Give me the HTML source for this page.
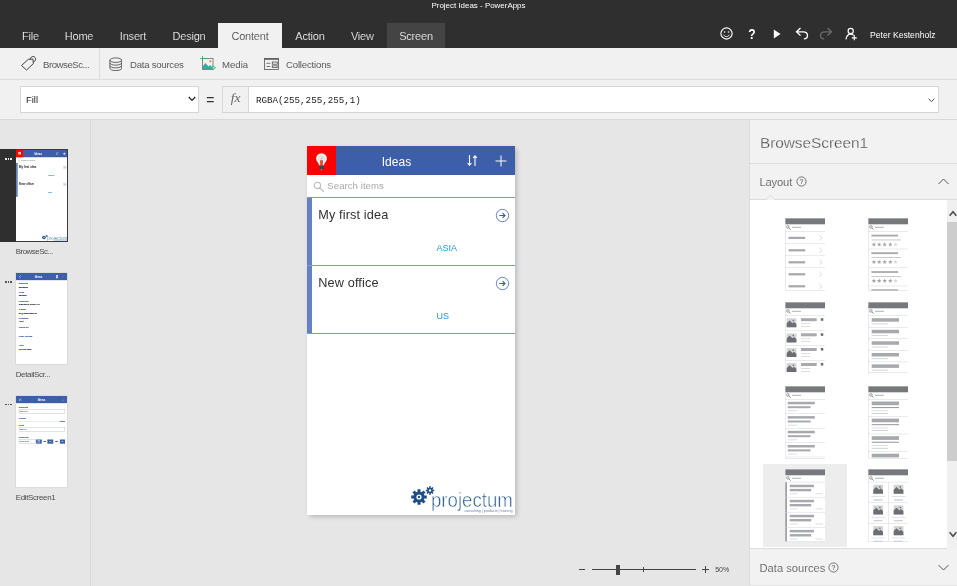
<!DOCTYPE html>
<html><head><meta charset="utf-8"><title>Project Ideas - PowerApps</title>
<style>
*{box-sizing:border-box;margin:0;padding:0}
html,body{width:957px;height:586px;overflow:hidden}
body{background:#e6e6e6;font-family:"Liberation Sans",sans-serif;position:relative;color:#333}
#root{position:absolute;left:0;top:0;width:957px;height:586px;overflow:hidden;will-change:transform;transform:translateZ(0)}
.abs{position:absolute}
#top{left:0;top:0;width:957px;height:48px;background:#2f2f2f}
#title{left:0;top:1px;width:957px;text-align:center;color:#fff;font-size:7.95px;line-height:10px}
.tab{position:absolute;top:23px;height:25px;line-height:26px;color:#fff;font-size:11px;letter-spacing:-0.2px;text-align:center;white-space:nowrap;-webkit-text-stroke:.2px #2f2f2f}
#ribbon{left:0;top:48px;width:957px;height:32px;background:#f1f1f1;border-bottom:1px solid #dcdcdc}
.rl{position:absolute;top:48px;height:31px;line-height:33px;font-size:9.6px;color:#5a5a5a;white-space:nowrap}
#fbar{left:0;top:80px;width:957px;height:40px;background:#f1f1f1;border-bottom:1px solid #d9d9d9}
#leftp{left:0;top:120px;width:91px;height:466px;background:#e6e6e6;border-right:1px solid #d8d8d8}
#rightp{left:749px;top:120px;width:208px;height:466px;background:#f2f2f2;border-left:1px solid #dcdcdc}
.phone{position:absolute;width:208px;height:369.5px;background:#fff;overflow:hidden;font-family:"Liberation Sans",sans-serif}
.phone .hd{position:absolute;left:0;top:0;width:100%;height:29px;background:#3d5fa9}
.phone .red{position:absolute;left:0;top:0;width:28.6px;height:29px;background:#fe0000}
.phone .ttl{position:absolute;left:0;top:.5px;width:179px;text-align:center;color:#fff;font-size:12px;line-height:30px;letter-spacing:.05px}
.phone .srch{position:absolute;left:20.3px;top:29px;height:22px;line-height:22px;font-size:9.6px;letter-spacing:.05px;color:#a9a9a9}
.phone .it{position:absolute;left:0;width:100%;height:68px;border-top:1px solid #7f98d0}
.phone .it .bar{position:absolute;left:0;top:0;width:5px;height:68px;background:#6682be}
.phone .it .t{position:absolute;left:11.3px;top:9px;font-size:12.7px;letter-spacing:.13px;line-height:16px;color:#333;white-space:nowrap}
.phone .it .r{position:absolute;left:129.5px;top:45.1px;font-size:9px;line-height:10px;color:#2796dc;white-space:nowrap}
.phone .it svg{position:absolute;left:187.9px;top:9.8px}
.phone .lb{position:absolute;left:11.5px;font-size:9.5px;line-height:10px;color:#3d5fa9;font-weight:bold;white-space:nowrap}
.phone .vl{position:absolute;left:11.5px;font-size:9.5px;line-height:10px;color:#222;white-space:nowrap}
.phone .inp{position:absolute;left:11.5px;width:188px;height:17px;border:1px solid #8a8a8a;font-size:8.5px;line-height:15px;padding-left:3px;color:#222}
.thumb{position:absolute;left:16px;width:52px;height:92px;overflow:hidden;background:#fff}
.thumb .phone{left:0;top:0;transform:scale(.2494);transform-origin:0 0}
.thumb.t2 .phone{transform:scale(.2452,.2471)}
.thumb .it{border-top-color:transparent}
.thumb .dv{display:none}
.thumb .it .bar{width:7px}
.thumb .it .r{font-weight:bold;font-size:10px;-webkit-text-stroke:.5px #2796dc}
.thumb .it .t{-webkit-text-stroke:.4px #333}
.thumb .plus{stroke-width:2.4px}
.thumb .ttl{font-weight:bold}
.thumb .lb{-webkit-text-stroke:.5px #3d5fa9}
.thumb .vl{-webkit-text-stroke:.5px #222}
.thumb .srch{-webkit-text-stroke:.4px #a9a9a9}
.tl{position:absolute;left:15.7px;font-size:7.9px;line-height:10px;color:#4a4a4a;white-space:nowrap;letter-spacing:-0.3px}
.dots{position:absolute;left:5px;width:7px;height:2px}
.dots i{position:absolute;top:0;width:1.7px;height:1.7px;background:#555}
.dots i.w{background:#e8e8e8}
</style></head><body><div id="root">
<div id="top" class="abs"></div>
<div id="title" class="abs">Project Ideas - PowerApps</div>
<div class="tab" style="left:10px;width:41px">File</div>
<div class="tab" style="left:54px;width:50px">Home</div>
<div class="tab" style="left:108px;width:50px">Insert</div>
<div class="tab" style="left:164px;width:50px">Design</div>
<div class="tab" style="left:218px;width:64px;background:#f1f1f1;color:#333;-webkit-text-stroke:.2px #f1f1f1">Content</div>
<div class="tab" style="left:285px;width:50px">Action</div>
<div class="tab" style="left:337.300px;width:50px">View</div>
<div class="tab" style="left:387px;width:58px;background:#444;-webkit-text-stroke:.2px #444">Screen</div>
<!-- right icons -->
<svg class="abs" style="left:718.600px;top:26.300px" width="15" height="15" viewBox="0 0 15 15" fill="none" stroke="#fff" stroke-width="1.150"><circle cx="7.500" cy="7.500" r="5.600"/><path d="M4.600 8.700c.7 1.400 1.800 1.900 2.900 1.900s2.200-.5 2.900-1.900" stroke-width=".9"/><circle cx="5.500" cy="6" r=".75" fill="#fff" stroke="none"/><circle cx="9.500" cy="6" r=".75" fill="#fff" stroke="none"/></svg>
<svg class="abs" style="left:745px;top:25px" width="14" height="18" viewBox="0 0 14 18"><text x="7" y="14.500" font-size="15.500" font-weight="bold" text-anchor="middle" fill="#fff" font-family="Liberation Sans, sans-serif" transform="translate(7 0) scale(.78 1) translate(-7 0)">?</text></svg>
<svg class="abs" style="left:773px;top:28.500px" width="8" height="10" viewBox="0 0 8 10"><path d="M.8 .4l6.700 4.600L.8 9.600z" fill="#fff"/></svg>
<svg class="abs" style="left:795px;top:27px" width="14" height="13" viewBox="0 0 14 13" fill="none" stroke="#fff" stroke-width="1.300"><path d="M5.500 1L1.500 4.800l4 3.800M1.800 4.800h6.400c2.500 0 4.300 1.600 4.300 3.700 0 2-1.500 3.400-3.600 3.400"/></svg>
<svg class="abs" style="left:819px;top:27px" width="14" height="13" viewBox="0 0 14 13" fill="none" stroke="#6b6b6b" stroke-width="1.300"><path d="M8.500 1l4 3.800-4 3.800M12.200 4.800H5.800c-2.500 0-4.300 1.600-4.300 3.700 0 2 1.500 3.400 3.600 3.400"/></svg>
<svg class="abs" style="left:844px;top:26px" width="15" height="15" viewBox="0 0 15 15" fill="none" stroke="#fff" stroke-width="1.150"><circle cx="6.700" cy="4.900" r="2.600"/><path d="M2 13.400c.4-3.200 2.300-5.300 4.700-5.300 1.200 0 2.200.4 3 1.200M10.300 9.300v5M7.800 11.800h5"/></svg>
<div class="abs" style="left:870px;top:23px;height:25px;line-height:24px;color:#fff;font-size:8.600px;white-space:nowrap">Peter Kestenholz</div>
<div id="ribbon" class="abs"></div>
<svg class="abs" style="left:20px;top:55px" width="18" height="18" viewBox="0 0 18 18" fill="none" stroke="#444" stroke-width="1"><path d="M1.500 10.500l6.800-6.200 4.700-.2.300 4.600-6.800 6.300z"/><path d="M10.200 4.200c.3-1.700 1.500-2.800 3-2.700 1.500.1 2.500 1.300 2.400 2.800-.1 1.400-1 2.400-2.400 2.700"/></svg>
<div class="rl" style="left:43px;letter-spacing:-0.450px">BrowseSc...</div>
<div class="abs" style="left:99px;top:48px;width:1px;height:31px;background:#dcdcdc"></div>
<svg class="abs" style="left:108.700px;top:56.800px" width="13.600" height="14.500" viewBox="0 0 15 16" fill="none" stroke="#444" stroke-width=".9"><ellipse cx="7.500" cy="3.500" rx="6.500" ry="2.500"/><path d="M1 3.500v9c0 1.400 2.900 2.500 6.500 2.500s6.500-1.100 6.500-2.500v-9M1 6.500C1 7.900 3.900 9 7.500 9S14 7.900 14 6.500M1 9.500C1 10.900 3.900 12 7.500 12s6.500-1.100 6.500-2.500"/></svg>
<div class="rl" style="left:130px;letter-spacing:-0.250px">Data sources</div>
<svg class="abs" style="left:200px;top:56px" width="16" height="16" viewBox="0 0 16 16" fill="none"><rect x="2.500" y="2.500" width="10.500" height="11" stroke="#7a7a7a" stroke-width=".9"/><path d="M3 13V10l2.500-3 3 3.500 1.500-1.500 2.500 2.500V13z" fill="#3aa9a4"/><circle cx="10.300" cy="5.200" r="1" fill="#e8742e"/><path d="M2.500 0v5M0 2.500h5" stroke="#3aa35a" stroke-width=".8"/><path d="M12.700 9.800l2.800 1.900-2.800 1.900z" stroke="#3aa35a" stroke-width=".8" fill="#f1f1f1"/></svg>
<div class="rl" style="left:222px">Media</div>
<svg class="abs" style="left:264px;top:58px" width="15" height="12" viewBox="0 0 15 12" fill="none" stroke="#555" stroke-width=".8"><rect x=".5" y=".5" width="14" height="11"/><path d="M.5 1.100h14" stroke-width="1.300"/><path d="M2.500 5.300h3.800M2.500 8.500h3.800"/><rect x="8.300" y="4" width="5" height="2.200"/><rect x="8.300" y="7.800" width="5" height="1.700"/></svg>
<div class="rl" style="left:286px;letter-spacing:-0.180px">Collections</div>
<div id="fbar" class="abs"></div>
<div class="abs" style="left:19.600px;top:86.100px;width:179.200px;height:27.200px;background:#fff;border:1px solid #d6d6d6"></div>
<div class="abs" style="left:26px;top:87px;height:26px;line-height:26px;font-size:9.400px;color:#222">Fill</div>
<svg class="abs" style="left:188px;top:96px" width="8" height="6" viewBox="0 0 8 6" fill="none" stroke="#222" stroke-width="1.300"><path d="M.8 1l3.200 3.400L7.200 1"/></svg>
<div class="abs" style="left:206.200px;top:88px;height:26px;line-height:25px;font-size:14px;color:#333">=</div>
<div class="abs" style="left:222.400px;top:86.100px;width:717px;height:27.200px;background:#fff;border:1px solid #d6d6d6"></div>
<div class="abs" style="left:223.400px;top:87.100px;width:25.500px;height:25.200px;background:#f1f1f1;border-right:1px solid #d6d6d6;font-family:'Liberation Serif',serif;font-style:italic;font-size:13.500px;line-height:22px;text-align:center;color:#666">fx</div>
<div class="abs" style="left:256px;top:87px;height:26px;line-height:27px;font-family:'Liberation Mono',monospace;font-size:9.200px;color:#222">RGBA(255,255,255,1)</div>
<svg class="abs" style="left:928px;top:98px" width="7" height="5" viewBox="0 0 7 5" fill="none" stroke="#555" stroke-width="1"><path d="M.7.700l2.800 3 2.800-3"/></svg>

<div class="phone" style="left:307px;top:146.400px;height:369.100px;box-shadow:1.5px 1.5px 5px rgba(0,0,0,.22)"><div class="abs" style="left:0;top:-.4px;width:208px;height:369.500px"><div class="hd"></div><div class="red"></div>
<svg class="abs" style="left:6.800px;top:5.500px" width="15" height="20" viewBox="0 0 15 20"><path d="M7.500 1.200a5.400 5.400 0 0 1 5.400 5.400c0 2.300-1.600 3.600-2.600 5.400l-.3 1.600H5l-.3-1.600C3.700 10.200 2.100 8.900 2.100 6.600a5.400 5.400 0 0 1 5.400-5.400z" fill="#f4f4f4"/><circle cx="7.500" cy="6.400" r="3.500" fill="#e2e2e2"/><circle cx="7.500" cy="6.700" r=".45" fill="#777"/><path d="M6 8.300h3l-.2 5.500H6.200z" fill="#ea4a35"/><path d="M5.300 13.600h4.400v2.600l-1.300 1.600H6.600l-1.300-1.600z" fill="#37474f"/><path d="M6.600 17.500h1.800l-.9 1z" fill="#eee"/></svg>
<div class="ttl">Ideas</div>
<svg class="abs" style="left:159px;top:8px" width="13" height="13" viewBox="0 0 13 13" fill="none" stroke="#fff" stroke-width="1.100"><path d="M3.500 1v10M1.600 9.200l1.900 1.900 1.900-1.900M9 12V2M7.100 3.800l1.900-1.900 1.900 1.900"/></svg>
<svg class="abs plus" style="left:188px;top:9px" width="12" height="12" viewBox="0 0 12 12" stroke="#fff" stroke-width="1"><path d="M6 .5v11M.5 6h11"/></svg>
<svg class="abs" style="left:5.800px;top:35px" width="11.600" height="11.600" viewBox="0 0 11 11" fill="none" stroke="#bcbcbc" stroke-width="1.050"><circle cx="4.200" cy="4.200" r="3"/><path d="M6.400 6.400l3.800 3.800"/></svg>
<div class="srch">Search items</div>
<div class="it" style="top:51px"><div class="bar"></div><div class="t">My first idea</div><div class="r">ASIA</div><svg width="15" height="15" viewBox="0 0 15 15" fill="none" stroke="#3d5fa9" stroke-width=".75"><circle cx="7.500" cy="7.500" r="6.200"/><path d="M4.300 7.500h5.500M7.600 5.100l2.400 2.400-2.400 2.400" stroke-width="1.200"/></svg></div>
<div class="it" style="top:119px"><div class="bar"></div><div class="t">New office</div><div class="r">US</div><svg width="15" height="15" viewBox="0 0 15 15" fill="none" stroke="#3d5fa9" stroke-width=".75"><circle cx="7.500" cy="7.500" r="6.200"/><path d="M4.300 7.500h5.500M7.600 5.100l2.400 2.400-2.400 2.400" stroke-width="1.200"/></svg></div>
<div class="abs dv" style="left:0;top:187px;width:100%;height:1px;background:#7f98d0"></div>
<div class="abs" style="left:104px;top:338px;width:104px;height:30px">
<svg class="abs" style="left:0;top:.5px" width="24" height="22" viewBox="0 0 24 22"><g fill="#1f4e86"><circle cx="8" cy="12" r="5.600"/><g stroke="#1f4e86" stroke-width="3"><path d="M8 4.200v15.600M.2 12h15.600M2.500 6.500l11 11M13.500 6.500l-11 11"/></g><circle cx="19" cy="5.500" r="2.800"/><g stroke="#1f4e86" stroke-width="1.600"><path d="M19 1.300v8.400M14.800 5.500h8.400M16 2.500l6 6M22 2.500l-6 6"/></g></g><circle cx="8" cy="12" r="2.600" fill="#fff"/><circle cx="8" cy="12" r="1.200" fill="#1f4e86"/><circle cx="19" cy="5.500" r="1.200" fill="#fff"/></svg>
<div class="abs" style="left:20.300px;top:2.400px;font-size:21px;line-height:28px;color:#2e5d93;white-space:nowrap;transform:scaleX(.888);transform-origin:0 0;-webkit-text-stroke:.5px #fff">projectum</div>
<div class="abs" style="left:53.400px;top:24.500px;font-size:3.640px;line-height:4px;color:#5f86b8;white-space:nowrap;width:50px">consulting | products | training</div>
</div></div></div>
<div id="leftp" class="abs"></div>
<div class="abs" style="left:0;top:149px;width:16px;height:93px;background:#2f2f2f"></div>
<div class="dots" style="top:158px"><i class="w" style="left:0"></i><i class="w" style="left:2.600px"></i><i class="w" style="left:5.200px"></i></div>
<div class="thumb" style="top:149px;height:93px;border:1px solid #3a3a3a;border-left:0;width:52px"><div class="phone"><div class="hd"></div><div class="red"></div>
<svg class="abs" style="left:6.800px;top:5.500px" width="15" height="20" viewBox="0 0 15 20"><path d="M7.500 1.200a5.400 5.400 0 0 1 5.400 5.400c0 2.300-1.600 3.600-2.600 5.400l-.3 1.600H5l-.3-1.600C3.700 10.200 2.100 8.900 2.100 6.600a5.400 5.400 0 0 1 5.400-5.400z" fill="#f4f4f4"/><circle cx="7.500" cy="6.400" r="3.500" fill="#e2e2e2"/><circle cx="7.500" cy="6.700" r=".45" fill="#777"/><path d="M6 8.300h3l-.2 5.500H6.200z" fill="#ea4a35"/><path d="M5.300 13.600h4.400v2.600l-1.300 1.600H6.600l-1.300-1.600z" fill="#37474f"/><path d="M6.600 17.500h1.800l-.9 1z" fill="#eee"/></svg>
<div class="ttl">Ideas</div>
<svg class="abs" style="left:159px;top:8px" width="13" height="13" viewBox="0 0 13 13" fill="none" stroke="#fff" stroke-width="1.100"><path d="M3.500 1v10M1.600 9.200l1.900 1.900 1.900-1.900M9 12V2M7.100 3.800l1.900-1.900 1.900 1.900"/></svg>
<svg class="abs plus" style="left:188px;top:9px" width="12" height="12" viewBox="0 0 12 12" stroke="#fff" stroke-width="1"><path d="M6 .5v11M.5 6h11"/></svg>
<svg class="abs" style="left:5.800px;top:35px" width="11.600" height="11.600" viewBox="0 0 11 11" fill="none" stroke="#bcbcbc" stroke-width="1.050"><circle cx="4.200" cy="4.200" r="3"/><path d="M6.400 6.400l3.800 3.800"/></svg>
<div class="srch">Search items</div>
<div class="it" style="top:51px"><div class="bar"></div><div class="t">My first idea</div><div class="r">ASIA</div><svg width="15" height="15" viewBox="0 0 15 15" fill="none" stroke="#3d5fa9" stroke-width=".75"><circle cx="7.500" cy="7.500" r="6.200"/><path d="M4.300 7.500h5.500M7.600 5.100l2.400 2.400-2.400 2.400" stroke-width="1.200"/></svg></div>
<div class="it" style="top:119px"><div class="bar"></div><div class="t">New office</div><div class="r">US</div><svg width="15" height="15" viewBox="0 0 15 15" fill="none" stroke="#3d5fa9" stroke-width=".75"><circle cx="7.500" cy="7.500" r="6.200"/><path d="M4.300 7.500h5.500M7.600 5.100l2.400 2.400-2.400 2.400" stroke-width="1.200"/></svg></div>
<div class="abs dv" style="left:0;top:187px;width:100%;height:1px;background:#7f98d0"></div>
<div class="abs" style="left:104px;top:338px;width:104px;height:30px">
<svg class="abs" style="left:0;top:.5px" width="24" height="22" viewBox="0 0 24 22"><g fill="#1f4e86"><circle cx="8" cy="12" r="5.600"/><g stroke="#1f4e86" stroke-width="3"><path d="M8 4.200v15.600M.2 12h15.600M2.500 6.500l11 11M13.500 6.500l-11 11"/></g><circle cx="19" cy="5.500" r="2.800"/><g stroke="#1f4e86" stroke-width="1.600"><path d="M19 1.300v8.400M14.800 5.500h8.400M16 2.500l6 6M22 2.500l-6 6"/></g></g><circle cx="8" cy="12" r="2.600" fill="#fff"/><circle cx="8" cy="12" r="1.200" fill="#1f4e86"/><circle cx="19" cy="5.500" r="1.200" fill="#fff"/></svg>
<div class="abs" style="left:20.300px;top:2.400px;font-size:21px;line-height:28px;color:#2e5d93;white-space:nowrap;transform:scaleX(.888);transform-origin:0 0;-webkit-text-stroke:.5px #fff">projectum</div>
<div class="abs" style="left:53.400px;top:24.500px;font-size:3.640px;line-height:4px;color:#5f86b8;white-space:nowrap;width:50px">consulting | products | training</div>
</div></div></div>
<div class="tl" style="top:247px;letter-spacing:-0.46px">BrowseSc...</div>
<div class="dots" style="top:281px"><i style="left:0"></i><i style="left:2.600px"></i><i style="left:5.200px"></i></div>
<div class="thumb t2" style="top:272.700px;left:16px;width:51px;height:91.300px;box-shadow:0 0 0 .5px #d0d0d0"><div class="phone"><div class="hd"></div><div class="ttl" style="width:184px">Ideas</div>
<svg class="abs" style="left:12px;top:8px" width="9" height="14" viewBox="0 0 9 14" fill="none" stroke="#fff" stroke-width="2"><path d="M7.500 1L1.500 7l6 6"/></svg>
<svg class="abs" style="left:161px;top:8px" width="12" height="14" viewBox="0 0 12 14" fill="#fff"><path d="M1 2h10v2H1zM4 0h4v2H4zM2.500 5h7l-.7 9H3.200z"/></svg>
<svg class="abs" style="left:187px;top:9px" width="12" height="12" viewBox="0 0 12 12" fill="none" stroke="#7f98d0" stroke-width="1.500"><path d="M1 11L11 1"/></svg><div class="lb" style="top:37.3px">Benefits</div><div class="vl" style="top:51.0px">5000000</div><div class="lb" style="top:71.4px">Cost</div><div class="vl" style="top:86.0px">250000</div><div class="lb" style="top:108.0px">Deadline</div><div class="vl" style="top:121.0px">3/26/2017 12:00 AM</div><div class="lb" style="top:142.0px">Owner</div><div class="vl" style="top:158.0px">pk@projectum.dk</div><div class="lb" style="top:179.0px">Location</div><div class="vl" style="top:192.0px">ASIA</div><div class="lb" style="top:213.0px">Voted By</div><div class="lb" style="top:253.0px">User ratings</div><div class="lb" style="top:288.0px">Title</div><div class="vl" style="top:304.0px">My first idea</div></div></div>
<div class="tl" style="top:370px">DetailScr...</div>
<div class="dots" style="top:403.500px"><i style="left:0"></i><i style="left:2.600px"></i><i style="left:5.200px"></i></div>
<div class="thumb t2" style="top:395.500px;left:16px;width:51px;height:91.300px;box-shadow:0 0 0 .5px #d0d0d0"><div class="phone"><div class="hd"></div><div class="ttl" style="width:100%">Ideas</div>
<svg class="abs" style="left:11px;top:9px" width="12" height="12" viewBox="0 0 12 12" fill="none" stroke="#fff" stroke-width="2"><path d="M1 1l10 10M11 1L1 11"/></svg>
<svg class="abs" style="left:186px;top:10px" width="13" height="11" viewBox="0 0 13 11" fill="none" stroke="#9fb2dc" stroke-width="1.600"><path d="M1 6l4 4 7-9"/></svg>
<div class="lb" style="top:39px">Benefits</div><div class="inp" style="top:54px">5000000</div>
<div class="lb" style="top:85.600px">Owner</div><div class="abs" style="left:11.500px;top:102px;width:188px;height:1px;background:#bbb"></div><div class="abs" style="left:178px;top:100.500px;width:21.500px;height:3px;background:#3d5fa9"></div>
<div class="lb" style="top:113px">Cost</div><div class="inp" style="top:127.500px">250000</div>
<div class="lb" style="top:160.600px">Deadline</div>
<div class="inp" style="top:176px;width:68px">3/26/2017</div>
<div class="abs" style="left:82px;top:176px;width:22.500px;height:17px;background:#3d5fa9"></div><div class="abs" style="left:88px;top:180px;width:10px;height:9px;border:1.500px solid #fff;border-top-width:3px"></div>
<div class="vl" style="left:112px;top:180px">00</div><div class="abs" style="left:128px;top:176px;width:24px;height:17px;background:#3d5fa9"></div><div class="abs" style="left:136px;top:183px;width:8px;height:2px;background:#fff"></div>
<div class="vl" style="left:160px;top:180px">00</div><div class="abs" style="left:179px;top:176px;width:20.700px;height:17px;background:#3d5fa9"></div><div class="abs" style="left:185px;top:183px;width:8px;height:2px;background:#fff"></div></div></div>
<div class="tl" style="top:493px">EditScreen1</div>
<div class="abs" style="left:578.500px;top:569.100px;width:6.500px;height:1px;background:#444"></div>
<div class="abs" style="left:591.500px;top:569.100px;width:104.500px;height:1px;background:#444"></div>
<div class="abs" style="left:616px;top:564.600px;width:4px;height:10px;background:#444"></div>
<div class="abs" style="left:643.300px;top:566.600px;width:1px;height:5.500px;background:#444"></div>
<div class="abs" style="left:702px;top:569.100px;width:7px;height:1px;background:#444"></div>
<div class="abs" style="left:705px;top:566.100px;width:1px;height:7px;background:#444"></div>
<div class="abs" style="left:715.300px;top:565px;font-size:7px;line-height:10px;color:#444;letter-spacing:-0.100px">50%</div>
<div id="rightp" class="abs"></div>
<div class="abs" style="left:760px;top:133px;font-size:15.400px;line-height:20px;color:#444;white-space:nowrap;letter-spacing:-0.050px;-webkit-text-stroke:.3px #f2f2f2">BrowseScreen1</div>
<div class="abs" style="left:750px;top:162.500px;width:207px;height:1px;background:#dcdcdc"></div>
<div class="abs" style="left:759.500px;top:174.800px;font-size:11.200px;line-height:14px;color:#444;white-space:nowrap;letter-spacing:-0.170px;-webkit-text-stroke:.2px #f2f2f2">Layout</div>
<svg class="abs" style="left:796.300px;top:175.800px" width="11" height="11" viewBox="0 0 11 11"><circle cx="5.500" cy="5.500" r="4.600" fill="none" stroke="#555" stroke-width=".8"/><text x="5.500" y="8.100" font-size="7" text-anchor="middle" fill="#444" font-family="Liberation Sans, sans-serif">?</text></svg>
<svg class="abs" style="left:937.500px;top:178px" width="11" height="7" viewBox="0 0 11 7" fill="none" stroke="#555" stroke-width="1"><path d="M.5 6l5-5 5 5"/></svg>
<div class="abs" style="left:750px;top:199px;width:207px;height:350px;background:#fff;border-top:1px solid #dcdcdc;border-bottom:1px solid #dcdcdc"></div>
<svg class="abs" style="left:766px;top:195px" width="9" height="5" viewBox="0 0 9 5"><path d="M0 5L4.500 .5 9 5z" fill="#f2f2f2"/><path d="M0 4.700L4.500 .5 9 4.700" fill="none" stroke="#dcdcdc" stroke-width=".8"/></svg>
<div class="abs" style="left:947px;top:200px;width:10px;height:349px;background:#f0f0f0"></div>
<div class="abs" style="left:947px;top:222px;width:10px;height:239px;background:#cdcdcd"></div>
<svg class="abs" style="left:948.500px;top:210px" width="8" height="7" viewBox="0 0 8 7" fill="none" stroke="#505050" stroke-width="1.700"><path d="M.6 5.800L4 1.800l3.400 4"/></svg>
<svg class="abs" style="left:948.500px;top:531px" width="8" height="7" viewBox="0 0 8 7" fill="none" stroke="#505050" stroke-width="1.700"><path d="M.6 1.200L4 5.200l3.400-4"/></svg>
<div class="abs" style="left:763px;top:464px;width:83.700px;height:83px;background:#ededed"></div>
<svg class="abs" style="left:784.5px;top:218.4px" width="40.600" height="72.800" viewBox="0 0 40.600 72.800"><rect x="0" y="0" width="40.6" height="72.8" fill="#fff"/><rect x="0" y="0" width="40.6" height="6.3" fill="#77787b"/><circle cx="2.900" cy="8.900" r="1.300" fill="none" stroke="#77787b" stroke-width=".7"/><path d="M3.900 9.900l1.800 1.800" stroke="#77787b" stroke-width=".8"/><rect x="7" y="8.800" width="9" height=".9" fill="#a8a9ac"/><rect x="0" y="13.15" width="40.6" height=".5" fill="#d4d4d6"/><rect x="3.60" y="18.80" width="16.60" height="2.20" fill="#a8a9ac"/><path d="M34.300 17.30l2.600 2.600-2.600 2.600" fill="none" stroke="#c2c3c5" stroke-width=".6"/><rect x="0" y="25.55" width="40.6" height=".5" fill="#d4d4d6"/><rect x="3.60" y="31.20" width="16.60" height="2.20" fill="#a8a9ac"/><path d="M34.300 29.70l2.600 2.600-2.600 2.600" fill="none" stroke="#c2c3c5" stroke-width=".6"/><rect x="0" y="37.55" width="40.6" height=".5" fill="#d4d4d6"/><rect x="3.60" y="43.20" width="16.60" height="2.20" fill="#a8a9ac"/><path d="M34.300 41.70l2.600 2.600-2.600 2.600" fill="none" stroke="#c2c3c5" stroke-width=".6"/><rect x="0" y="49.55" width="40.6" height=".5" fill="#d4d4d6"/><rect x="3.60" y="55.20" width="16.60" height="2.20" fill="#a8a9ac"/><path d="M34.300 53.70l2.600 2.600-2.600 2.600" fill="none" stroke="#c2c3c5" stroke-width=".6"/><rect x="3.60" y="67.20" width="16.60" height="2.20" fill="#a8a9ac"/><path d="M34.300 65.70l2.600 2.600-2.600 2.600" fill="none" stroke="#c2c3c5" stroke-width=".6"/><rect x=".25" y=".25" width="40.100" height="72.300" fill="none" stroke="#d6d6d8" stroke-width=".5"/></svg>
<svg class="abs" style="left:867.8px;top:218.4px" width="40.600" height="72.800" viewBox="0 0 40.600 72.800"><rect x="0" y="0" width="40.6" height="72.8" fill="#fff"/><rect x="0" y="0" width="40.6" height="6.3" fill="#77787b"/><circle cx="2.900" cy="8.900" r="1.300" fill="none" stroke="#77787b" stroke-width=".7"/><path d="M3.900 9.900l1.800 1.800" stroke="#77787b" stroke-width=".8"/><rect x="7" y="8.800" width="9" height=".9" fill="#a8a9ac"/><rect x="0" y="13.15" width="40.6" height=".5" fill="#d4d4d6"/><rect x="3.40" y="16.70" width="26.70" height="1.80" fill="#a8a9ac"/><rect x="3.40" y="21.60" width="29.60" height="0.70" fill="#b5b6b8"/><polygon points="5.90,24.10 6.49,25.68 8.18,25.76 6.86,26.81 7.31,28.44 5.90,27.51 4.49,28.44 4.94,26.81 3.62,25.76 5.31,25.68" fill="#a3a4a7"/><polygon points="11.20,24.10 11.79,25.68 13.48,25.76 12.16,26.81 12.61,28.44 11.20,27.51 9.79,28.44 10.24,26.81 8.92,25.76 10.61,25.68" fill="#a3a4a7"/><polygon points="16.70,24.10 17.29,25.68 18.98,25.76 17.66,26.81 18.11,28.44 16.70,27.51 15.29,28.44 15.74,26.81 14.42,25.76 16.11,25.68" fill="#a3a4a7"/><polygon points="22.30,24.10 22.89,25.68 24.58,25.76 23.26,26.81 23.71,28.44 22.30,27.51 20.89,28.44 21.34,26.81 20.02,25.76 21.71,25.68" fill="#a3a4a7"/><polygon points="27.60,24.10 28.19,25.68 29.88,25.76 28.56,26.81 29.01,28.44 27.60,27.51 26.19,28.44 26.64,26.81 25.32,25.76 27.01,25.68" fill="#d9d9db"/><rect x="0" y="30.75" width="40.6" height=".5" fill="#d4d4d6"/><rect x="3.40" y="34.30" width="26.70" height="1.80" fill="#a8a9ac"/><rect x="3.40" y="39.20" width="29.60" height="0.70" fill="#b5b6b8"/><polygon points="5.90,41.70 6.49,43.28 8.18,43.36 6.86,44.41 7.31,46.04 5.90,45.11 4.49,46.04 4.94,44.41 3.62,43.36 5.31,43.28" fill="#a3a4a7"/><polygon points="11.20,41.70 11.79,43.28 13.48,43.36 12.16,44.41 12.61,46.04 11.20,45.11 9.79,46.04 10.24,44.41 8.92,43.36 10.61,43.28" fill="#a3a4a7"/><polygon points="16.70,41.70 17.29,43.28 18.98,43.36 17.66,44.41 18.11,46.04 16.70,45.11 15.29,46.04 15.74,44.41 14.42,43.36 16.11,43.28" fill="#a3a4a7"/><polygon points="22.30,41.70 22.89,43.28 24.58,43.36 23.26,44.41 23.71,46.04 22.30,45.11 20.89,46.04 21.34,44.41 20.02,43.36 21.71,43.28" fill="#a3a4a7"/><polygon points="27.60,41.70 28.19,43.28 29.88,43.36 28.56,44.41 29.01,46.04 27.60,45.11 26.19,46.04 26.64,44.41 25.32,43.36 27.01,43.28" fill="#d9d9db"/><rect x="0" y="49.55" width="40.6" height=".5" fill="#d4d4d6"/><rect x="3.40" y="53.10" width="26.70" height="1.80" fill="#a8a9ac"/><rect x="3.40" y="58.00" width="29.60" height="0.70" fill="#b5b6b8"/><polygon points="5.90,60.50 6.49,62.08 8.18,62.16 6.86,63.21 7.31,64.84 5.90,63.91 4.49,64.84 4.94,63.21 3.62,62.16 5.31,62.08" fill="#a3a4a7"/><polygon points="11.20,60.50 11.79,62.08 13.48,62.16 12.16,63.21 12.61,64.84 11.20,63.91 9.79,64.84 10.24,63.21 8.92,62.16 10.61,62.08" fill="#a3a4a7"/><polygon points="16.70,60.50 17.29,62.08 18.98,62.16 17.66,63.21 18.11,64.84 16.70,63.91 15.29,64.84 15.74,63.21 14.42,62.16 16.11,62.08" fill="#a3a4a7"/><polygon points="22.30,60.50 22.89,62.08 24.58,62.16 23.26,63.21 23.71,64.84 22.30,63.91 20.89,64.84 21.34,63.21 20.02,62.16 21.71,62.08" fill="#a3a4a7"/><polygon points="27.60,60.50 28.19,62.08 29.88,62.16 28.56,63.21 29.01,64.84 27.60,63.91 26.19,64.84 26.64,63.21 25.32,62.16 27.01,62.08" fill="#d9d9db"/><rect x="0" y="67.75" width="40.6" height=".5" fill="#d4d4d6"/><rect x="3.40" y="71.30" width="26.70" height="1.80" fill="#a8a9ac"/><rect x=".25" y=".25" width="40.100" height="72.300" fill="none" stroke="#d6d6d8" stroke-width=".5"/></svg>
<svg class="abs" style="left:784.5px;top:301.7px" width="40.600" height="72.800" viewBox="0 0 40.600 72.800"><rect x="0" y="0" width="40.6" height="72.8" fill="#fff"/><rect x="0" y="0" width="40.6" height="6.3" fill="#77787b"/><circle cx="2.900" cy="8.900" r="1.300" fill="none" stroke="#77787b" stroke-width=".7"/><path d="M3.900 9.900l1.800 1.800" stroke="#77787b" stroke-width=".8"/><rect x="7" y="8.800" width="9" height=".9" fill="#a8a9ac"/><rect x="0" y="13.45" width="40.6" height=".5" fill="#d4d4d6"/><g transform="translate(1.70,16.30)"><rect width="9.7" height="9" fill="#d3d4d6"/><path d="M0 9V4.95l2.91-2.70 2.91 2.70 1.45-1.35 2.42 1.98V9z" fill="#6d6e71"/><circle cx="6.60" cy="2.16" r=".8" fill="#6d6e71"/></g><rect x="15.90" y="16.20" width="15.80" height="3.00" fill="#a8a9ac"/><rect x="15.90" y="21.40" width="9.40" height="0.70" fill="#cfcfd1"/><rect x="15.90" y="24.20" width="9.40" height="0.70" fill="#cfcfd1"/><rect x="35.80" y="16.20" width="2.50" height="2.60" fill="#6d6e71"/><rect x="0" y="28.55" width="40.6" height=".5" fill="#d4d4d6"/><g transform="translate(1.70,31.40)"><rect width="9.7" height="9" fill="#d3d4d6"/><path d="M0 9V4.95l2.91-2.70 2.91 2.70 1.45-1.35 2.42 1.98V9z" fill="#6d6e71"/><circle cx="6.60" cy="2.16" r=".8" fill="#6d6e71"/></g><rect x="15.90" y="31.30" width="15.80" height="3.00" fill="#a8a9ac"/><rect x="15.90" y="36.50" width="9.40" height="0.70" fill="#cfcfd1"/><rect x="15.90" y="39.30" width="9.40" height="0.70" fill="#cfcfd1"/><rect x="35.80" y="31.30" width="2.50" height="2.60" fill="#6d6e71"/><rect x="0" y="43.25" width="40.6" height=".5" fill="#d4d4d6"/><g transform="translate(1.70,46.10)"><rect width="9.7" height="9" fill="#d3d4d6"/><path d="M0 9V4.95l2.91-2.70 2.91 2.70 1.45-1.35 2.42 1.98V9z" fill="#6d6e71"/><circle cx="6.60" cy="2.16" r=".8" fill="#6d6e71"/></g><rect x="15.90" y="46.00" width="15.80" height="3.00" fill="#a8a9ac"/><rect x="15.90" y="51.20" width="9.40" height="0.70" fill="#cfcfd1"/><rect x="15.90" y="54.00" width="9.40" height="0.70" fill="#cfcfd1"/><rect x="35.80" y="46.00" width="2.50" height="2.60" fill="#6d6e71"/><rect x="0" y="58.25" width="40.6" height=".5" fill="#d4d4d6"/><g transform="translate(1.70,61.10)"><rect width="9.7" height="9" fill="#d3d4d6"/><path d="M0 9V4.95l2.91-2.70 2.91 2.70 1.45-1.35 2.42 1.98V9z" fill="#6d6e71"/><circle cx="6.60" cy="2.16" r=".8" fill="#6d6e71"/></g><rect x="15.90" y="61.00" width="15.80" height="3.00" fill="#a8a9ac"/><rect x="15.90" y="66.20" width="9.40" height="0.70" fill="#cfcfd1"/><rect x="15.90" y="69.00" width="9.40" height="0.70" fill="#cfcfd1"/><rect x="35.80" y="61.00" width="2.50" height="2.60" fill="#6d6e71"/><rect x=".25" y=".25" width="40.100" height="72.300" fill="none" stroke="#d6d6d8" stroke-width=".5"/></svg>
<svg class="abs" style="left:867.8px;top:301.7px" width="40.600" height="72.800" viewBox="0 0 40.600 72.800"><rect x="0" y="0" width="40.6" height="72.8" fill="#fff"/><rect x="0" y="0" width="40.6" height="6.3" fill="#77787b"/><circle cx="2.900" cy="8.900" r="1.300" fill="none" stroke="#77787b" stroke-width=".7"/><path d="M3.900 9.900l1.800 1.800" stroke="#77787b" stroke-width=".8"/><rect x="7" y="8.800" width="9" height=".9" fill="#a8a9ac"/><rect x="0" y="13.45" width="40.6" height=".5" fill="#d4d4d6"/><rect x="3.70" y="16.20" width="27.30" height="3.50" fill="#a8a9ac"/><rect x="3.70" y="21.60" width="16.40" height="0.70" fill="#c4c5c7"/><rect x="0" y="25.05" width="40.6" height=".5" fill="#d4d4d6"/><rect x="3.70" y="27.80" width="27.30" height="3.50" fill="#a8a9ac"/><rect x="3.70" y="33.20" width="16.40" height="0.70" fill="#c4c5c7"/><rect x="0" y="36.55" width="40.6" height=".5" fill="#d4d4d6"/><rect x="3.70" y="39.30" width="27.30" height="3.50" fill="#a8a9ac"/><rect x="3.70" y="44.70" width="16.40" height="0.70" fill="#c4c5c7"/><rect x="0" y="48.25" width="40.6" height=".5" fill="#d4d4d6"/><rect x="3.70" y="51.00" width="27.30" height="3.50" fill="#a8a9ac"/><rect x="3.70" y="56.40" width="16.40" height="0.70" fill="#c4c5c7"/><rect x="0" y="59.65" width="40.6" height=".5" fill="#d4d4d6"/><rect x="3.70" y="62.40" width="27.30" height="3.50" fill="#a8a9ac"/><rect x="3.70" y="67.80" width="16.40" height="0.70" fill="#c4c5c7"/><rect x="0" y="70.05" width="40.6" height=".5" fill="#d4d4d6"/><rect x=".25" y=".25" width="40.100" height="72.300" fill="none" stroke="#d6d6d8" stroke-width=".5"/></svg>
<svg class="abs" style="left:784.5px;top:385.9px" width="40.600" height="72.800" viewBox="0 0 40.600 72.800"><rect x="0" y="0" width="40.6" height="72.8" fill="#fff"/><rect x="0" y="0" width="40.6" height="6.3" fill="#77787b"/><circle cx="2.900" cy="8.900" r="1.300" fill="none" stroke="#77787b" stroke-width=".7"/><path d="M3.900 9.900l1.800 1.800" stroke="#77787b" stroke-width=".8"/><rect x="7" y="8.800" width="9" height=".9" fill="#a8a9ac"/><rect x="0" y="13.05" width="40.6" height=".5" fill="#d4d4d6"/><rect x="2.70" y="15.80" width="27.10" height="2.50" fill="#a8a9ac"/><rect x="2.70" y="20.20" width="22.80" height="2.00" fill="#a8a9ac"/><rect x="2.70" y="24.50" width="9.60" height="0.70" fill="#cfcfd1"/><rect x="0" y="27.35" width="40.6" height=".5" fill="#d4d4d6"/><rect x="2.70" y="30.10" width="27.10" height="2.50" fill="#a8a9ac"/><rect x="2.70" y="34.50" width="22.80" height="2.00" fill="#a8a9ac"/><rect x="2.70" y="38.80" width="9.60" height="0.70" fill="#cfcfd1"/><rect x="0" y="42.05" width="40.6" height=".5" fill="#d4d4d6"/><rect x="2.70" y="44.80" width="27.10" height="2.50" fill="#a8a9ac"/><rect x="2.70" y="49.20" width="22.80" height="2.00" fill="#a8a9ac"/><rect x="2.70" y="53.50" width="9.60" height="0.70" fill="#cfcfd1"/><rect x="0" y="56.25" width="40.6" height=".5" fill="#d4d4d6"/><rect x="2.70" y="59.00" width="27.10" height="2.50" fill="#a8a9ac"/><rect x="2.70" y="63.40" width="22.80" height="2.00" fill="#a8a9ac"/><rect x="2.70" y="67.70" width="9.60" height="0.70" fill="#cfcfd1"/><rect x="0" y="70.75" width="40.6" height=".5" fill="#d4d4d6"/><rect x=".25" y=".25" width="40.100" height="72.300" fill="none" stroke="#d6d6d8" stroke-width=".5"/></svg>
<svg class="abs" style="left:867.8px;top:385.9px" width="40.600" height="72.800" viewBox="0 0 40.600 72.800"><rect x="0" y="0" width="40.6" height="72.8" fill="#fff"/><rect x="0" y="0" width="40.6" height="6.3" fill="#77787b"/><circle cx="2.900" cy="8.900" r="1.300" fill="none" stroke="#77787b" stroke-width=".7"/><path d="M3.900 9.900l1.800 1.800" stroke="#77787b" stroke-width=".8"/><rect x="7" y="8.800" width="9" height=".9" fill="#a8a9ac"/><rect x="0" y="13.05" width="40.6" height=".5" fill="#d4d4d6"/><rect x="3.70" y="15.50" width="27.30" height="3.70" fill="#a8a9ac"/><rect x="3.70" y="21.00" width="27.30" height="1.10" fill="#9d9ea1"/><rect x="3.70" y="24.50" width="16.40" height="0.70" fill="#cfcfd1"/><rect x="3.70" y="27.20" width="16.40" height="0.70" fill="#bdbec0"/><rect x="0" y="30.15" width="40.6" height=".5" fill="#d4d4d6"/><rect x="3.70" y="32.60" width="27.30" height="3.70" fill="#a8a9ac"/><rect x="3.70" y="38.10" width="27.30" height="1.10" fill="#9d9ea1"/><rect x="3.70" y="41.60" width="16.40" height="0.70" fill="#cfcfd1"/><rect x="3.70" y="44.30" width="16.40" height="0.70" fill="#bdbec0"/><rect x="0" y="47.75" width="40.6" height=".5" fill="#d4d4d6"/><rect x="3.70" y="50.20" width="27.30" height="3.70" fill="#a8a9ac"/><rect x="3.70" y="55.70" width="27.30" height="1.10" fill="#9d9ea1"/><rect x="3.70" y="59.20" width="16.40" height="0.70" fill="#cfcfd1"/><rect x="3.70" y="61.90" width="16.40" height="0.70" fill="#bdbec0"/><rect x="0" y="65.25" width="40.6" height=".5" fill="#d4d4d6"/><rect x="3.70" y="67.70" width="27.30" height="3.70" fill="#a8a9ac"/><rect x=".25" y=".25" width="40.100" height="72.300" fill="none" stroke="#d6d6d8" stroke-width=".5"/></svg>
<svg class="abs" style="left:784.5px;top:469.3px" width="40.600" height="72.800" viewBox="0 0 40.600 72.800"><rect x="0" y="0" width="40.6" height="72.8" fill="#fff"/><rect x="0" y="0" width="40.6" height="6.3" fill="#77787b"/><circle cx="2.900" cy="8.900" r="1.300" fill="none" stroke="#77787b" stroke-width=".7"/><path d="M3.900 9.900l1.800 1.800" stroke="#77787b" stroke-width=".8"/><rect x="7" y="8.800" width="9" height=".9" fill="#a8a9ac"/><rect x="0.00" y="13.10" width="1.80" height="59.30" fill="#8a8b8e"/><rect x="0" y="12.85" width="40.6" height=".5" fill="#d4d4d6"/><rect x="4.70" y="15.70" width="24.30" height="2.50" fill="#a8a9ac"/><rect x="4.70" y="19.90" width="21.50" height="2.40" fill="#a8a9ac"/><rect x="4.70" y="24.50" width="7.90" height="0.70" fill="#cfcfd1"/><rect x="30.50" y="24.50" width="7.50" height="0.70" fill="#cfcfd1"/><rect x="0" y="27.95" width="40.6" height=".5" fill="#d4d4d6"/><rect x="4.70" y="30.80" width="24.30" height="2.50" fill="#a8a9ac"/><rect x="4.70" y="35.00" width="21.50" height="2.40" fill="#a8a9ac"/><rect x="4.70" y="39.60" width="7.90" height="0.70" fill="#cfcfd1"/><rect x="30.50" y="39.60" width="7.50" height="0.70" fill="#cfcfd1"/><rect x="0" y="42.95" width="40.6" height=".5" fill="#d4d4d6"/><rect x="4.70" y="45.80" width="24.30" height="2.50" fill="#a8a9ac"/><rect x="4.70" y="50.00" width="21.50" height="2.40" fill="#a8a9ac"/><rect x="4.70" y="54.60" width="7.90" height="0.70" fill="#cfcfd1"/><rect x="30.50" y="54.60" width="7.50" height="0.70" fill="#cfcfd1"/><rect x="0" y="58.05" width="40.6" height=".5" fill="#d4d4d6"/><rect x="4.70" y="60.90" width="24.30" height="2.50" fill="#a8a9ac"/><rect x="4.70" y="65.10" width="21.50" height="2.40" fill="#a8a9ac"/><rect x="4.70" y="69.70" width="7.90" height="0.70" fill="#cfcfd1"/><rect x="30.50" y="69.70" width="7.50" height="0.70" fill="#cfcfd1"/><rect x=".25" y=".25" width="40.100" height="72.300" fill="none" stroke="#d6d6d8" stroke-width=".5"/></svg>
<svg class="abs" style="left:867.8px;top:469.3px" width="40.600" height="72.800" viewBox="0 0 40.600 72.800"><rect x="0" y="0" width="40.6" height="72.8" fill="#fff"/><rect x="0" y="0" width="40.6" height="6.3" fill="#77787b"/><circle cx="2.900" cy="8.900" r="1.300" fill="none" stroke="#77787b" stroke-width=".7"/><path d="M3.900 9.900l1.800 1.800" stroke="#77787b" stroke-width=".8"/><rect x="7" y="8.800" width="9" height=".9" fill="#a8a9ac"/><rect x="20.150" y="13.100" width=".5" height="59.300" fill="#d4d4d6"/><rect x="0" y="12.85" width="40.6" height=".5" fill="#d4d4d6"/><g transform="translate(5.30,15.70)"><rect width="9.7" height="9.1" fill="#d3d4d6"/><path d="M0 9.1V5.00l2.91-2.73 2.91 2.73 1.45-1.36 2.42 2.00V9.1z" fill="#6d6e71"/><circle cx="6.60" cy="2.18" r=".8" fill="#6d6e71"/></g><rect x="3.20" y="27.30" width="13.80" height="0.60" fill="#cfcfd1"/><rect x="5.60" y="30.30" width="8.90" height="1.40" fill="#d0d1d3"/><g transform="translate(25.70,15.70)"><rect width="9.7" height="9.1" fill="#d3d4d6"/><path d="M0 9.1V5.00l2.91-2.73 2.91 2.73 1.45-1.36 2.42 2.00V9.1z" fill="#6d6e71"/><circle cx="6.60" cy="2.18" r=".8" fill="#6d6e71"/></g><rect x="23.60" y="27.30" width="13.80" height="0.60" fill="#cfcfd1"/><rect x="26.00" y="30.30" width="8.90" height="1.40" fill="#d0d1d3"/><rect x="0" y="33.55" width="40.6" height=".5" fill="#d4d4d6"/><g transform="translate(5.30,36.40)"><rect width="9.7" height="9.1" fill="#d3d4d6"/><path d="M0 9.1V5.00l2.91-2.73 2.91 2.73 1.45-1.36 2.42 2.00V9.1z" fill="#6d6e71"/><circle cx="6.60" cy="2.18" r=".8" fill="#6d6e71"/></g><rect x="3.20" y="48.00" width="13.80" height="0.60" fill="#cfcfd1"/><rect x="5.60" y="51.00" width="8.90" height="1.40" fill="#d0d1d3"/><g transform="translate(25.70,36.40)"><rect width="9.7" height="9.1" fill="#d3d4d6"/><path d="M0 9.1V5.00l2.91-2.73 2.91 2.73 1.45-1.36 2.42 2.00V9.1z" fill="#6d6e71"/><circle cx="6.60" cy="2.18" r=".8" fill="#6d6e71"/></g><rect x="23.60" y="48.00" width="13.80" height="0.60" fill="#cfcfd1"/><rect x="26.00" y="51.00" width="8.90" height="1.40" fill="#d0d1d3"/><rect x="0" y="54.25" width="40.6" height=".5" fill="#d4d4d6"/><g transform="translate(5.30,57.10)"><rect width="9.7" height="9.1" fill="#d3d4d6"/><path d="M0 9.1V5.00l2.91-2.73 2.91 2.73 1.45-1.36 2.42 2.00V9.1z" fill="#6d6e71"/><circle cx="6.60" cy="2.18" r=".8" fill="#6d6e71"/></g><rect x="3.20" y="68.70" width="13.80" height="0.60" fill="#cfcfd1"/><rect x="5.60" y="71.70" width="8.90" height="1.40" fill="#d0d1d3"/><g transform="translate(25.70,57.10)"><rect width="9.7" height="9.1" fill="#d3d4d6"/><path d="M0 9.1V5.00l2.91-2.73 2.91 2.73 1.45-1.36 2.42 2.00V9.1z" fill="#6d6e71"/><circle cx="6.60" cy="2.18" r=".8" fill="#6d6e71"/></g><rect x="23.60" y="68.70" width="13.80" height="0.60" fill="#cfcfd1"/><rect x="26.00" y="71.70" width="8.90" height="1.40" fill="#d0d1d3"/><rect x=".25" y=".25" width="40.100" height="72.300" fill="none" stroke="#d6d6d8" stroke-width=".5"/></svg>
<div class="abs" style="left:759.500px;top:561.300px;font-size:11.200px;line-height:14px;color:#444;white-space:nowrap;-webkit-text-stroke:.2px #f2f2f2">Data sources</div>
<div class="abs" style="left:750px;top:585px;width:207px;height:1px;background:#e2e2e2"></div>
<svg class="abs" style="left:827.500px;top:562px" width="11" height="11" viewBox="0 0 11 11"><circle cx="5.500" cy="5.500" r="4.600" fill="none" stroke="#555" stroke-width=".8"/><text x="5.500" y="8.100" font-size="7" text-anchor="middle" fill="#444" font-family="Liberation Sans, sans-serif">?</text></svg>
<svg class="abs" style="left:937.500px;top:564px" width="11" height="7" viewBox="0 0 11 7" fill="none" stroke="#555" stroke-width="1"><path d="M.5 1l5 5 5-5"/></svg>

</div></body></html>
